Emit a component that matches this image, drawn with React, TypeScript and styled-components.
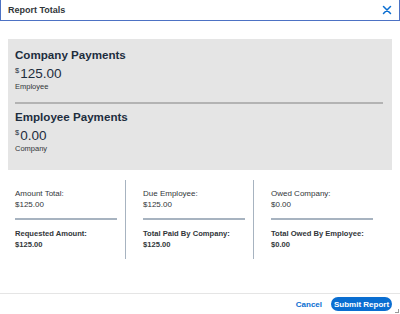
import React from "react";
import styled, { createGlobalStyle } from "styled-components";

const Global = createGlobalStyle`
  html, body { margin: 0; padding: 0; background: #fff; }
  body { font-family: "Liberation Sans", Arial, sans-serif; color: #32363a; }
  * { box-sizing: border-box; }
`;

const Dialog = styled.div`
  width: 400px;
  height: 314px;
  display: flex;
  flex-direction: column;
  background: #fff;
  position: relative;
  overflow: hidden;
`;

const Header = styled.div`
  height: 21px;
  display: flex;
  align-items: center;
  justify-content: space-between;
  padding: 0 6px 0 7px;
  border: 1px solid #4d72c4;
  border-top: none;
`;

const Title = styled.div`
  font-size: 9px;
  font-weight: bold;
  color: #32363a;
  margin-top: -1px;
`;

const Close = styled.button`
  border: none;
  background: none;
  padding: 0;
  width: 12px;
  height: 12px;
  display: flex;
  align-items: center;
  justify-content: center;
  cursor: pointer;
`;

const Body = styled.div`
  flex: 1;
  padding: 18px 8px 0 8px;
  display: flex;
  flex-direction: column;
`;

const Panel = styled.div`
  background: #e5e5e5;
  padding: 9px 9px 0 7px;
  height: 131px;
  display: flex;
  flex-direction: column;
`;

const Block = styled.div`
  display: flex;
  flex-direction: column;
`;

const BlockTitle = styled.div`
  font-size: 11.6px;
  font-weight: bold;
  color: #1d2d3e;
  line-height: 14px;
`;

const Amount = styled.div`
  font-size: 13.5px;
  color: #1d2d3e;
  line-height: 16px;
  margin-top: 1px;
`;

const Currency = styled.span`
  font-size: 7.5px;
  vertical-align: 5px;
  margin-right: 1px;
`;

const Sub = styled.div`
  font-size: 7.5px;
  color: #32363a;
  line-height: 10px;
`;

const PanelRule = styled.div`
  height: 2px;
  background: #b3b3b3;
  margin: 10px 0 6px 0;
`;

const Columns = styled.div`
  display: grid;
  grid-template-columns: 1fr 1fr 1fr;
  padding-top: 10px;
`;

const Column = styled.div<{ $divider?: boolean }>`
  padding: 8px 0 0 7px;
  margin-right: 10px;
  height: 79px;
  display: flex;
  flex-direction: column;
  border-right: ${(p) => (p.$divider ? "1.5px solid #a7b3c0" : "none")};
`;

const Inner = styled.div`
  width: 102px;
  display: flex;
  flex-direction: column;
`;

const Label = styled.div<{ $bold?: boolean }>`
  font-size: ${(p) => (p.$bold ? "7.6px" : "8px")};
  line-height: 11px;
  font-weight: ${(p) => (p.$bold ? "bold" : "normal")};
  color: #32363a;
`;

const ColRule = styled.div`
  height: 2px;
  background: #a7b3c0;
  margin: 8px 0 8px 0;
`;

const Footer = styled.div`
  height: 21px;
  border-top: 1px solid #e5e5e5;
  display: flex;
  align-items: center;
  justify-content: flex-end;
  gap: 9px;
  padding: 0 8px 0 0;
  margin-top: auto;
`;

const TextButton = styled.button`
  border: none;
  background: none;
  font-family: inherit;
  font-size: 8px;
  font-weight: bold;
  color: #0a6ed1;
  padding: 0;
  cursor: pointer;
`;

const PrimaryButton = styled.button`
  border: none;
  background: #0a6ed1;
  color: #fff;
  font-family: inherit;
  font-size: 8px;
  font-weight: bold;
  height: 14px;
  width: 61px;
  border-radius: 7px;
  padding: 0;
  cursor: pointer;
`;

const Grip = styled.div`
  position: absolute;
  right: 1px;
  bottom: 1px;
  width: 4px;
  height: 4px;
  border-right: 1px solid #999;
  border-bottom: 1px solid #999;
`;

const columns = [
  { l1: "Amount Total:", v1: "$125.00", l2: "Requested Amount:", v2: "$125.00" },
  { l1: "Due Employee:", v1: "$125.00", l2: "Total Paid By Company:", v2: "$125.00" },
  { l1: "Owed Company:", v1: "$0.00", l2: "Total Owed By Employee:", v2: "$0.00" },
];

export default function App() {
  return (
    <>
      <Global />
      <Dialog>
        <Header>
          <Title>Report Totals</Title>
          <Close aria-label="Close">
            <svg width="10" height="10" viewBox="0 0 10 10">
              <path d="M1.5 1.5 L8.5 8.5 M8.5 1.5 L1.5 8.5" stroke="#0a6ed1" strokeWidth="1.5" strokeLinecap="round" />
            </svg>
          </Close>
        </Header>
        <Body>
          <Panel>
            <Block>
              <BlockTitle>Company Payments</BlockTitle>
              <Amount>
                <Currency>$</Currency>125.00
              </Amount>
              <Sub>Employee</Sub>
            </Block>
            <PanelRule />
            <Block>
              <BlockTitle>Employee Payments</BlockTitle>
              <Amount>
                <Currency>$</Currency>0.00
              </Amount>
              <Sub>Company</Sub>
            </Block>
          </Panel>
          <Columns>
            {columns.map((c, i) => (
              <Column key={i} $divider={i < 2}>
                <Inner>
                  <Label>{c.l1}</Label>
                  <Label>{c.v1}</Label>
                  <ColRule />
                  <Label $bold>{c.l2}</Label>
                  <Label $bold>{c.v2}</Label>
                </Inner>
              </Column>
            ))}
          </Columns>
        </Body>
        <Footer>
          <TextButton>Cancel</TextButton>
          <PrimaryButton>Submit Report</PrimaryButton>
        </Footer>
        <Grip />
      </Dialog>
    </>
  );
}
